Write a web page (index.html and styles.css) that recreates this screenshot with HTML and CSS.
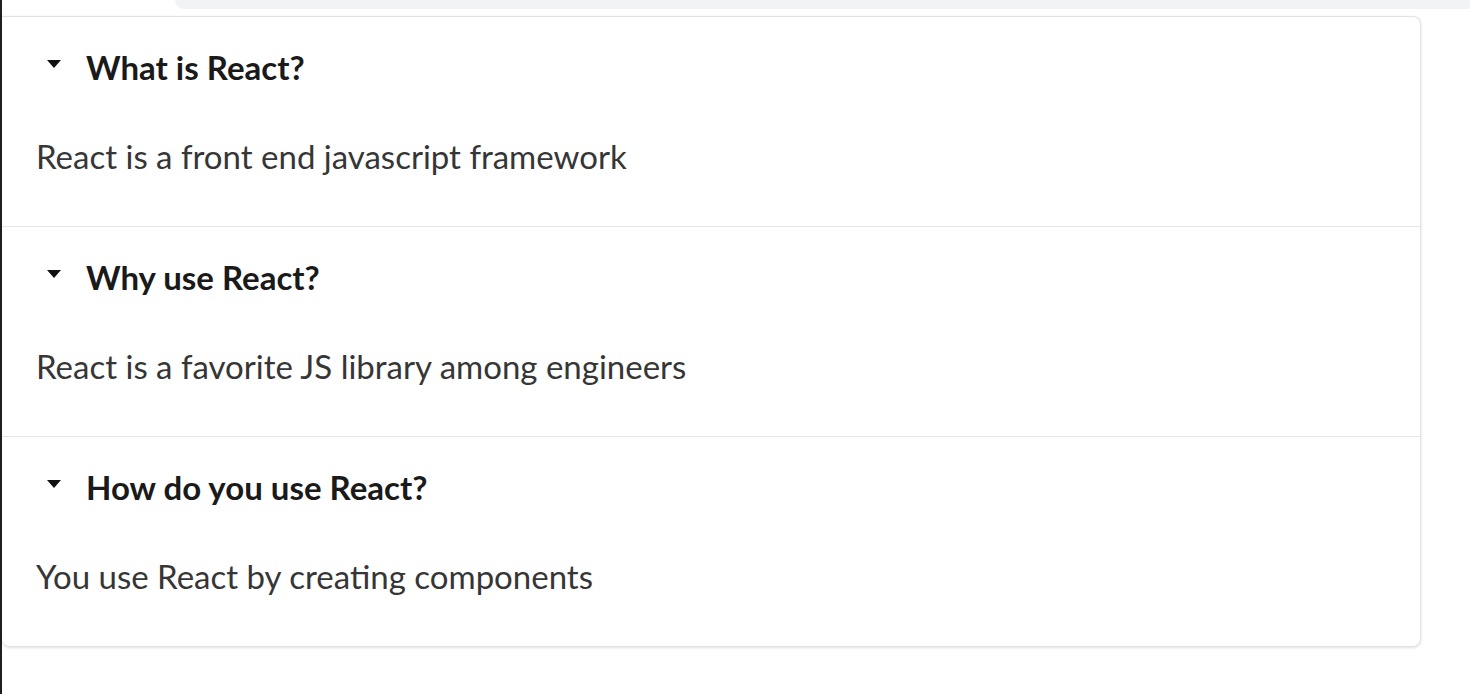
FILE: index.html
```html
<!DOCTYPE html>
<html lang="en">
<head>
<meta charset="utf-8">
<title>FAQ</title>
<link rel="stylesheet" href="styles.css">
</head>
<body>
<div class="page">
  <div class="edge"></div>
  <main class="main">
    <div class="topbar"><div class="searchbar"></div></div>
    <section class="card">
      <div class="item">
        <div class="question">
          <svg class="caret" width="14" height="8" viewBox="0 0 14 8"><path d="M0 0 H14 L7 8 Z" fill="#111"/></svg>
          <span>What is React?</span>
        </div>
        <p class="answer">React is a front end javascript framework</p>
      </div>
      <div class="item">
        <div class="question">
          <svg class="caret" width="14" height="8" viewBox="0 0 14 8"><path d="M0 0 H14 L7 8 Z" fill="#111"/></svg>
          <span>Why use React?</span>
        </div>
        <p class="answer">React is a favorite JS library among engineers</p>
      </div>
      <div class="item">
        <div class="question">
          <svg class="caret" width="14" height="8" viewBox="0 0 14 8"><path d="M0 0 H14 L7 8 Z" fill="#111"/></svg>
          <span>How do you use React?</span>
        </div>
        <p class="answer">You use React by creating components</p>
      </div>
    </section>
  </main>
</div>
</body>
</html>
```
FILE: styles.css
```css
html, body {
  margin: 0;
  padding: 0;
  background: #ffffff;
  font-family: Lato, "Open Sans", sans-serif;
}
.page {
  display: flex;
  height: 694px;
  overflow: hidden;
}
.edge {
  width: 2px;
  flex: none;
  background: #1d1f22;
}
.main {
  flex: 1;
  display: flex;
  flex-direction: column;
}
.topbar {
  height: 16px;
  padding-left: 173px;
}
.searchbar {
  height: 9px;
  background: #f2f3f5;
  border-bottom-left-radius: 14px;
}
.card {
  width: 1418px;
  border: 1px solid #e2e2e2;
  border-left: none;
  border-radius: 0 8px 8px 8px;
  box-shadow: 0 1px 3px rgba(0, 0, 0, 0.12);
  background: #fff;
}
.item {
  height: 210px;
  box-sizing: border-box;
  padding: 33px 0 0 34px;
  border-bottom: 1px solid #e6e6e6;
}
.item:last-child {
  border-bottom: none;
  height: 209px;
}
.question {
  display: flex;
  align-items: center;
  height: 34px;
  font-weight: 700;
  font-size: 33px;
  color: #1a1a1a;
}
.caret {
  margin-left: 11px;
  margin-right: 25px;
  margin-top: -6px;
  flex: none;
}
.answer {
  margin: 52px 0 0 0;
  font-size: 33px;
  line-height: 40px;
  color: #363636;
}
```
